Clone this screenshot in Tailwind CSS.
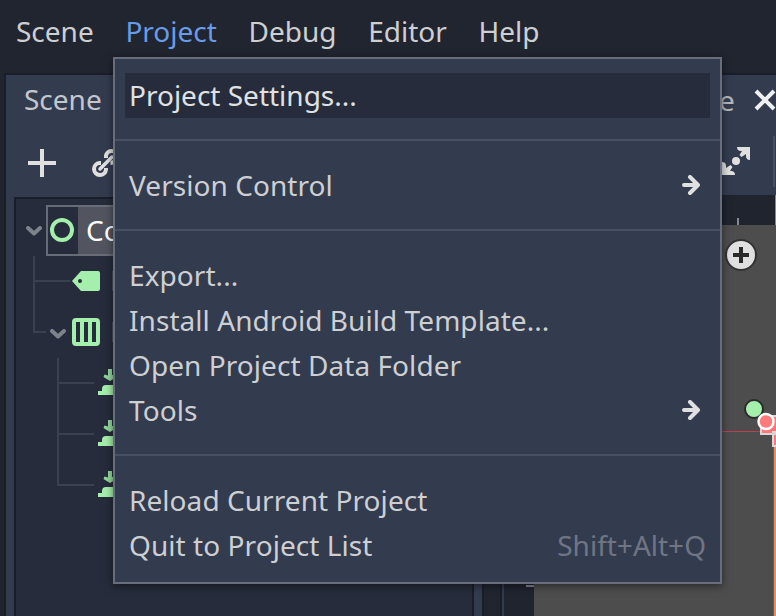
<!DOCTYPE html>
<html lang="en">
<head>
<meta charset="utf-8">
<title>Project menu</title>
<script src="https://cdn.jsdelivr.net/npm/@tailwindcss/browser@4"></script>
</head>
<body class="relative flex h-[616px] w-[776px] flex-col overflow-hidden bg-[#212530] font-['Noto_Sans',sans-serif] text-[28px] text-[#cdcfd2]">
  <svg class="hidden">
    <symbol id="caret" viewBox="0 0 16 10"><path d="M2 2l6 5.500L14 2" fill="none" stroke="#7e828b" stroke-width="4" stroke-linecap="round" stroke-linejoin="round"/></symbol>
    <symbol id="drop" viewBox="0 0 28 28"><path d="M10 1h4v6l3-.5 1.500 2.500-6.500 4-6.500-4 1-2.500 3.500 1z" fill="#93d79b"/><path d="M0 27v-4h4v-2q0-4 4-4h16v10z" fill="#a5efac"/></symbol>
    <symbol id="arrow" viewBox="0 0 18 20"><path d="M2 10h14M8 2l8 8-8 8" fill="none" stroke="#e0e0e0" stroke-width="4" stroke-linecap="round" stroke-linejoin="round"/></symbol>
  </svg>

  <nav class="flex h-[73px] shrink-0 gap-[31.7px] pl-4 leading-[62px]">
    <span>Scene</span><span class="text-[#699ce8]">Project</span><span>Debug</span><span>Editor</span><span>Help</span>
  </nav>

  <div class="flex min-h-0 flex-1 gap-4 pl-1">
    <!-- Scene dock -->
    <section class="flex w-[480px] shrink-0 flex-col border-x-2 border-t-2 border-[#1a1e28] bg-[#333b4f]">
      <h2 class="h-[74px] pl-[18px] leading-[48px] text-[#c3c6cd]">Scene</h2>
      <div class="flex h-12 gap-9 pl-[22px]">
        <svg class="h-7 w-7" viewBox="0 0 28 28"><path d="M12 0h4v12h12v4H16v12h-4V16H0v-4h12z" fill="#e0e0e0"/></svg>
        <svg class="h-7 w-7" viewBox="0 0 28 28" fill="none" stroke="#e0e0e0" stroke-width="4" stroke-linecap="round"><path d="M14 9V7.500a5.500 5.500 0 0 1 11 0q0 2.500-2 4.500t-4.500 2M14 19v1.500A6 6 0 1 1 7.500 14H9" stroke-linecap="butt"/><path d="M8 20L20 8" stroke-width="3.500"/></svg>
      </div>
      <div class="relative mx-2 flex-1 border-2 border-b-0 border-[#1a1e28] bg-[#262c3b] pt-1.5">
        <svg class="absolute top-0 left-0 h-[320px] w-[100px]" viewBox="16 199 100 320" fill="none" stroke="#3b4150" stroke-width="2"><path d="M34 256v76h12M34 281h36M58 358v128M58 383h36M58 434h36M57 485h37"/></svg>
        <div class="relative flex h-[51px] items-center pl-2.5">
          <svg class="h-[10px] w-4"><use href="#caret"/></svg>
          <div class="ml-1 flex h-[51px] flex-1 items-center border-2 border-[#686c79]">
            <svg class="mx-0.5 -mt-0.5 h-[26px] w-[26px]" viewBox="0 0 26 26"><circle cx="12" cy="13" r="10" fill="none" stroke="#a5efac" stroke-width="4"/></svg>
            <div class="h-[47px] flex-1 bg-[#52555f] pl-2 leading-[46px] text-white">Co</div>
          </div>
        </div>
        <div class="relative flex h-[51px] items-center pb-px pl-14">
          <svg class="h-[20px] w-7" viewBox="0 0 28 20"><path fill-rule="evenodd" d="M9 0h17q2 0 2 2v16q0 2-2 2H9L0 10zM8 8a2 2 0 1 0 0 4 2 2 0 0 0 0-4z" fill="#a5efac"/></svg>
          <i class="ml-3 h-5 w-px bg-[#4c505c]"></i>
        </div>
        <div class="relative flex h-[51px] items-center pb-0.5 pl-[34px]">
          <svg class="mt-1 h-[10px] w-4"><use href="#caret"/></svg>
          <svg class="ml-1.5 h-7 w-7" viewBox="0 0 28 28"><path fill-rule="evenodd" d="M4 0h20q4 0 4 4v20q0 4-4 4H4q-4 0-4-4V4q0-4 4-4zM4 4v20h4V4zM12 4v20h4V4zM20 4v20h4V4z" fill="#a5efac"/></svg>
          <i class="ml-3 h-5 w-px bg-[#4c505c]"></i>
        </div>
        <div class="relative flex h-[51px] items-center pb-[3px] pl-[82px]"><svg class="h-7 w-7"><use href="#drop"/></svg></div>
        <div class="relative flex h-[51px] items-center pb-[3px] pl-[82px]"><svg class="h-7 w-7"><use href="#drop"/></svg></div>
        <div class="relative flex h-[51px] items-center pb-[3px] pl-[82px]"><svg class="h-7 w-7"><use href="#drop"/></svg></div>
      </div>
    </section>

    <!-- Viewport -->
    <section class="flex flex-1 flex-col overflow-hidden border-t-2 border-l-2 border-[#1a1e28] bg-[#333b4f]">
      <div class="flex h-[61px] items-center pl-[217px] text-[#b4b7bd]">
        <span class="-mt-[12px] w-[41px] leading-[50px]">e</span>
        <svg class="-mt-[11px] h-[22px] w-[22px] shrink-0" viewBox="0 0 22 22"><path d="M2 2l18 18M20 2L2 20" stroke="#f0f0f0" stroke-width="4"/></svg>
      </div>
      <div class="flex h-[59px] pl-[220px]">
        <svg class="mt-[11px] h-7 w-7 shrink-0" viewBox="0 0 28 28" fill="#e0e0e0"><circle cx="14" cy="14" r="4"/><path d="M15 0h13v13q-4 0-4-4V7l-4.500 3-2-2L20 4h-1q-4 0-4-4zM13 28H0V15q4 0 4 4v2l4.500-3 2 2L8 24h1q4 0 4 4z"/></svg>
        <i class="ml-[23px] h-[51px] w-[2px] bg-[#485064]"></i>
      </div>
      <div class="ml-0.5 flex-1 bg-[#20242f]">
        <svg class="h-[421px] w-[272px]" viewBox="504 195 272 421">
          <path d="M534 225h242v391H534z" fill="#4d4d4d"/>
          <path d="M737 218h2v7h-2zM775 195h1v30h-1zM526 585h8v2h-8z" fill="#858891"/>
          <path d="M534 431h242v1H534z" fill="#b8404f"/>
          <path d="M774 446h2v170h-2z" fill="#ee8a62"/><path d="M773 446h1v170h-1z" fill="#596067"/>
          <circle cx="741" cy="255" r="15" fill="#e0e0e0" stroke="#333" stroke-width="2"/>
          <path d="M739 247h4v6h6v4h-6v6h-4v-6h-6v-4h6z" fill="#2a2a2a"/>
          <path d="M754 409l22 22" stroke="#303030" stroke-width="4"/><path d="M754 409l22 22" stroke="#a5efac" stroke-width="2"/>
          <path d="M761 416h18v18h-18zM773 432h10v14h-10z" fill="#ff7777" stroke="#d7d7d7" stroke-width="2"/>
          <circle cx="754" cy="409" r="9" fill="#a5efac" stroke="#2b2b2b" stroke-width="2"/>
          <circle cx="766" cy="421.500" r="7.500" fill="#ff7b7b" stroke="#fff" stroke-width="2.500"/>
        </svg>
      </div>
    </section>
  </div>

  <!-- Project menu popup -->
  <div class="absolute top-[57px] left-[113px] flex h-[527px] w-[609px] flex-col border-2 border-[#686d7d] bg-[#333b4f] pt-[14px] leading-[45px] tracking-[0.06px] shadow-[0_2px_8px_rgba(0,0,0,0.5)]">
    <div class="mx-2.5 h-[45px] bg-[#262c3b] pl-1 tracking-normal text-[#e0e1e3]">Project Settings...</div>
    <div class="h-[45px] pt-[21px]"><hr class="w-full border-t-2 border-[#485064]"></div>
    <div class="flex h-[45px] items-center justify-between pr-5 pl-3.5"><span>Version Control</span><svg class="-mt-px h-5 w-[18px]"><use href="#arrow"/></svg></div>
    <div class="h-[45px] pt-[21px]"><hr class="w-full border-t-2 border-[#485064]"></div>
    <div class="h-[45px] pl-3.5">Export...</div>
    <div class="h-[45px] pl-3.5">Install Android Build Template...</div>
    <div class="h-[45px] pl-3.5">Open Project Data Folder</div>
    <div class="flex h-[45px] items-center justify-between pr-5 pl-3.5"><span>Tools</span><svg class="-mt-px h-5 w-[18px]"><use href="#arrow"/></svg></div>
    <div class="h-[45px] pt-[21px]"><hr class="w-full border-t-2 border-[#485064]"></div>
    <div class="h-[45px] pl-3.5">Reload Current Project</div>
    <div class="flex h-[45px] justify-between pr-3.5 pl-3.5"><span>Quit to Project List</span><span class="tracking-normal text-[#707583]">Shift+Alt+Q</span></div>
  </div>
</body>
</html>
